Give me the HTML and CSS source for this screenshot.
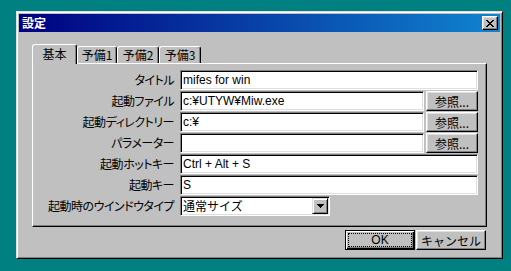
FILE: index.html
```html
<!DOCTYPE html>
<html lang="ja">
<head>
    <meta charset="UTF-8">
    <title>設定</title>
    <link rel="stylesheet" href="styles.css">
</head>
<body>
    <div class="window">
        <!-- Barre de titre -->
        <div class="titlebar">
            <span class="title">設定</span>
            <button class="close-btn" aria-label="閉じる">
                <svg width="8" height="7" viewBox="0 0 8 7" shape-rendering="crispEdges">
                    <rect x="0" y="0" width="2" height="1"/><rect x="6" y="0" width="2" height="1"/>
                    <rect x="1" y="1" width="2" height="1"/><rect x="5" y="1" width="2" height="1"/>
                    <rect x="2" y="2" width="4" height="1"/>
                    <rect x="3" y="3" width="2" height="1"/>
                    <rect x="2" y="4" width="4" height="1"/>
                    <rect x="1" y="5" width="2" height="1"/><rect x="5" y="5" width="2" height="1"/>
                    <rect x="0" y="6" width="2" height="1"/><rect x="6" y="6" width="2" height="1"/>
                </svg>
            </button>
        </div>

        <div class="dialog-body">
            <!-- Onglets -->
            <div class="tabs">
                <div class="tab active tab-kihon">基本</div>
                <div class="tab tab-yobi1">予備1</div>
                <div class="tab tab-yobi2">予備2</div>
                <div class="tab tab-yobi3">予備3</div>
            </div>

            <div class="tab-panel">
                <div class="label">タイトル</div>
                <div class="field"><div class="textbox">mifes for win</div></div>

                <div class="label">起動ファイル</div>
                <div class="field">
                    <div class="textbox">c:¥UTYW¥Miw.exe</div>
                    <button class="btn browse-btn">参照...</button>
                </div>

                <div class="label">起動ディレクトリー</div>
                <div class="field">
                    <div class="textbox">c:¥</div>
                    <button class="btn browse-btn">参照...</button>
                </div>

                <div class="label">パラメーター</div>
                <div class="field">
                    <div class="textbox"></div>
                    <button class="btn browse-btn">参照...</button>
                </div>

                <div class="label">起動ホットキー</div>
                <div class="field"><div class="textbox">Ctrl + Alt + S</div></div>

                <div class="label">起動キー</div>
                <div class="field"><div class="textbox">S</div></div>

                <div class="label">起動時のウインドウタイプ</div>
                <div class="field">
                    <div class="combo">
                        <span class="combo-text">通常サイズ</span>
                        <span class="combo-arrow">
                            <svg width="7" height="4" viewBox="0 0 7 4" shape-rendering="crispEdges">
                                <rect x="0" y="0" width="7" height="1"/>
                                <rect x="1" y="1" width="5" height="1"/>
                                <rect x="2" y="2" width="3" height="1"/>
                                <rect x="3" y="3" width="1" height="1"/>
                            </svg>
                        </span>
                    </div>
                </div>
            </div>

            <!-- Boutons du dialogue -->
            <div class="dialog-buttons">
                <button class="btn dialog-btn default-btn"><span class="focus-rect">OK</span></button>
                <button class="btn dialog-btn">キャンセル</button>
            </div>
        </div>
    </div>
</body>
</html>
```

FILE: styles.css
```css
body {
    margin: 0;
    padding: 11px 0 0 16px;
    background-color: #008080;
    font-family: "Liberation Sans", "Noto Sans CJK JP", sans-serif;
    font-size: 12px;
    color: #000;
}

.window {
    box-sizing: border-box;
    width: 487px;
    height: 248px;
    background-color: #c0c0c0;
    border: 1px solid;
    border-color: #dfdfdf #000 #000 #dfdfdf;
    box-shadow: inset 1px 1px #fff, inset -1px -1px #808080;
    padding: 2px;
}

.titlebar {
    display: flex;
    align-items: center;
    justify-content: space-between;
    height: 18px;
    padding-left: 3px;
    background: linear-gradient(to right, #000080, #1084d0);
}

.title {
    color: #fff;
    font-family: "Noto Sans CJK JP", sans-serif;
    font-weight: bold;
    font-size: 12px;
    line-height: 18px;
}

.close-btn {
    box-sizing: border-box;
    display: flex;
    align-items: center;
    justify-content: center;
    width: 16px;
    height: 14px;
    margin-right: 2px;
    padding: 0;
    background-color: #c0c0c0;
    border: 1px solid;
    border-color: #fff #000 #000 #fff;
    box-shadow: inset -1px -1px #808080, inset 1px 1px #dfdfdf;
}

.dialog-body {
    padding: 12px 13px 0 13px;
}

/* Onglets */
.tabs {
    display: flex;
    align-items: flex-end;
    height: 19px;
}

.tab {
    box-sizing: border-box;
    height: 17px;
    background-color: #c0c0c0;
    border-top: 1px solid #fff;
    border-left: 1px solid #fff;
    border-right: 1px solid #000;
    border-radius: 3px 3px 0 0;
    box-shadow: inset -1px 0 #808080;
    font-family: "Noto Sans CJK JP", sans-serif;
    font-feature-settings: "palt";
    line-height: 15px;
    text-align: center;
}

.tab.active {
    position: relative;
    z-index: 1;
    height: 20px;
    margin-bottom: -1px;
    line-height: 17px;
}

.tab-kihon { width: 45px; }
.tab-yobi1 { width: 40px; }
.tab-yobi2 { width: 42px; }
.tab-yobi3 { width: 42px; }

.tab-panel {
    box-sizing: border-box;
    height: 164px;
    display: grid;
    grid-template-columns: 141px 1fr;
    grid-auto-rows: 20px;
    column-gap: 6px;
    row-gap: 1px;
    padding: 6px 8px 0 0;
    border: 1px solid;
    border-color: #fff #000 #000 #fff;
    box-shadow: inset -1px -1px #808080;
}

.label {
    font-family: "Noto Sans CJK JP", sans-serif;
    font-feature-settings: "palt";
    letter-spacing: -0.5px;
    line-height: 20px;
    text-align: right;
    white-space: nowrap;
}

.field {
    display: flex;
    gap: 2px;
}

.textbox {
    box-sizing: border-box;
    flex: 1;
    height: 20px;
    padding-left: 2px;
    background-color: #fff;
    border: 1px solid;
    border-color: #808080 #fff #fff #808080;
    box-shadow: inset 1px 1px #000, inset -1px -1px #dfdfdf;
    line-height: 18px;
    white-space: nowrap;
}

.btn {
    box-sizing: border-box;
    background-color: #c0c0c0;
    border: 1px solid;
    border-color: #fff #000 #000 #fff;
    box-shadow: inset -1px -1px #808080, inset 1px 1px #dfdfdf;
    font-family: "Noto Sans CJK JP", sans-serif;
    font-size: 12px;
    color: #000;
    padding: 0;
}

.browse-btn {
    width: 52px;
    height: 20px;
    line-height: 17px;
}

.combo {
    box-sizing: border-box;
    display: flex;
    align-items: center;
    width: 150px;
    height: 20px;
    padding: 1px;
    background-color: #fff;
    border: 1px solid;
    border-color: #808080 #fff #fff #808080;
    box-shadow: inset 1px 1px #000, inset -1px -1px #dfdfdf;
}

.combo-text {
    flex: 1;
    padding-left: 1px;
    font-family: "Noto Sans CJK JP", sans-serif;
    line-height: 16px;
}

.combo-arrow {
    box-sizing: border-box;
    display: flex;
    align-items: center;
    justify-content: center;
    width: 16px;
    height: 16px;
    background-color: #c0c0c0;
    border: 1px solid;
    border-color: #dfdfdf #000 #000 #dfdfdf;
    box-shadow: inset 1px 1px #fff, inset -1px -1px #808080;
}

.dialog-buttons {
    display: flex;
    justify-content: flex-end;
    gap: 1px;
    margin-top: 3px;
    padding-right: 1px;
}

.dialog-btn {
    width: 70px;
    height: 20px;
    line-height: 17px;
}

.default-btn {
    display: flex;
    padding: 2px;
    border: 1px solid #000;
    box-shadow: inset 1px 1px #fff, inset -1px -1px #000, inset -2px -2px #808080;
}

.focus-rect {
    flex: 1;
    border: 1px dotted #000;
    font-family: "Liberation Sans", sans-serif;
    line-height: 12px;
}
```
